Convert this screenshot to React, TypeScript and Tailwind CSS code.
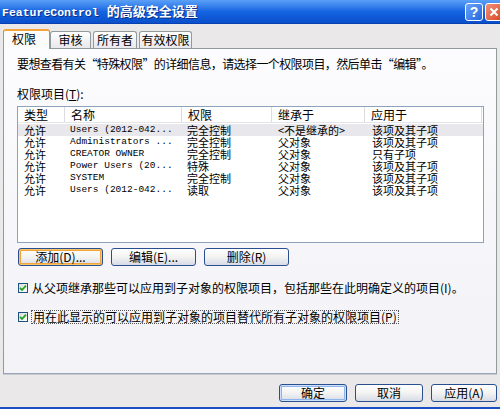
import React from 'react';

const cjk = { fontFamily: '"Noto Sans CJK SC", "Liberation Sans", sans-serif' };
const mono = { fontFamily: '"Liberation Mono", "Noto Sans CJK SC", monospace' };

const rows = [
  { type: '允许', name: 'Users (2012-042...', perm: '完全控制', from: '<不是继承的>', to: '该项及其子项' },
  { type: '允许', name: 'Administrators ...', perm: '完全控制', from: '父对象', to: '该项及其子项' },
  { type: '允许', name: 'CREATOR OWNER', perm: '完全控制', from: '父对象', to: '只有子项' },
  { type: '允许', name: 'Power Users (20...', perm: '特殊', from: '父对象', to: '该项及其子项' },
  { type: '允许', name: 'SYSTEM', perm: '完全控制', from: '父对象', to: '该项及其子项' },
  { type: '允许', name: 'Users (2012-042...', perm: '读取', from: '父对象', to: '该项及其子项' },
];

const XpButton: React.FC<{ label: string; width: string; ring?: 'orange' | 'blue' }> = ({ label, width, ring }) => (
  <button
    className={`${width} h-[18px] rounded-[3px] border border-[#2a4f8f] bg-gradient-to-b from-white via-[#f3f3f1] to-[#d6dbe7] text-[12px] leading-none text-black flex items-center justify-center whitespace-nowrap ${
      ring === 'orange'
        ? 'shadow-[inset_0_0_0_1px_#f9c56a,inset_0_0_0_2px_#f0a43a]'
        : ring === 'blue'
        ? 'shadow-[inset_0_0_0_1px_#cde0fb,inset_0_0_0_2px_#8eb4ec]'
        : ''
    }`}
    style={cjk}
  >
    {label}
  </button>
);

const CheckBox: React.FC = () => (
  <span className="w-[10px] h-[10px] border border-[#1c5180] bg-gradient-to-br from-[#dcdcd6] to-white flex items-center justify-center shrink-0">
    <svg width="8" height="8" viewBox="0 0 8 8">
      <path d="M1 3.8 L3 6 L7 1.6" stroke="#21a121" strokeWidth="1.8" fill="none" />
    </svg>
  </span>
);

const App: React.FC = () => {
  const tabs = ['审核', '所有者', '有效权限'];
  return (
    <div className="w-[500px] h-[409px] flex flex-col bg-[#ebe8ea] overflow-hidden" style={cjk}>
      {/* title bar */}
      <div className="h-[24px] shrink-0 flex items-center justify-between pl-[2px] bg-gradient-to-b from-[#5aa0f6] via-[#1464e2] to-[#0a4fcc] border-b border-[#0a3fb0]">
        <div className="text-white font-bold text-[13px] flex items-baseline [text-shadow:1px_1px_0_#0a2f8a]">
          <span style={mono} className="text-[11.5px]">FeatureControl</span>
          <span className="ml-[8px]">的高级安全设置</span>
        </div>
        <div className="flex items-center gap-[2px] self-start mt-[3px]">
          <div className="w-[18px] h-[18px] rounded-[3px] border border-white bg-gradient-to-br from-[#6aa4f7] to-[#2266dd] text-white text-[14px] font-bold leading-none flex items-center justify-center" style={{ fontFamily: '"Liberation Sans", sans-serif' }}>
            ?
          </div>
          <div className="w-[18px] h-[18px] rounded-[3px] border border-white bg-gradient-to-br from-[#f0907a] to-[#d9441c] text-white flex items-center justify-center -mr-[3px]">
            <svg width="10" height="10" viewBox="0 0 10 10">
              <path d="M1.5 1.5 L8.5 8.5 M8.5 1.5 L1.5 8.5" stroke="white" strokeWidth="2" />
            </svg>
          </div>
        </div>
      </div>

      {/* tabs */}
      <div className="mt-[5px] ml-[3px] flex items-end h-[19px] shrink-0 relative z-10">
        <div className="w-[47px] h-[20px] -mb-[1px] bg-[#fbfbfc] border border-b-0 border-[#919b9c] border-t-[#f0a43a] border-t-2 rounded-t-[3px] text-[12px] pl-[8px] pt-[1px] leading-[14px] whitespace-nowrap">
          权限
        </div>
        {tabs.map((t, i) => (
          <div
            key={t}
            className={`h-[17px] bg-gradient-to-b from-white to-[#e8e8ed] border border-b-0 border-[#919b9c] rounded-t-[3px] text-[12px] leading-[16px] whitespace-nowrap flex justify-center ${
              i === 0 ? 'w-[41px]' : i === 1 ? 'w-[44px] ml-[2px]' : 'w-[53px] ml-[2px]'
            }`}
          >
            {t}
          </div>
        ))}
      </div>

      {/* tab panel */}
      <div className="mx-[3px] h-[326px] shrink-0 border border-[#919b9c] border-b-[#9aa6b8] shadow-[0_1px_0_#c8c8d0] bg-gradient-to-b from-[#fcfcfe] to-[#f2f2f7] pt-[9px] px-[13px] text-[12px] leading-[12px] text-black flex flex-col">
        <div className="whitespace-nowrap tracking-[-0.6px]">要想查看有关“特殊权限”的详细信息，请选择一个权限项目，然后单击“编辑”。</div>
        <div className="mt-[18px]">
          权限项目(<span className="underline">T</span>):
        </div>

        {/* list view */}
        <div className="mt-[6px] w-[467px] h-[137px] border border-[#8da3bd] bg-white flex flex-col">
          <div className="h-[16px] grid grid-cols-[46px_117px_90px_93px_118px] border-b border-[#e4e4e8] leading-[15px]">
            {['类型', '名称', '权限', '继承于', '应用于'].map((h, i) => (
              <div key={h} className={`pl-[6px] ${i > 0 ? 'border-l border-[#dcdce0]' : ''} ${i === 3 ? 'pl-[3px]' : ''} ${i === 4 ? 'pl-[2px] border-r' : ''}`}>
                {h}
              </div>
            ))}
          </div>
          <div className="mt-[1px]">
            {rows.map((r, idx) => (
              <div
                key={idx}
                className={`h-[12px] grid grid-cols-[46px_117px_90px_93px_118px] text-[11px] leading-[12px] ${idx === 0 ? 'bg-[#e8e7ec]' : ''}`}
              >
                <div className="pl-[6px]">{r.type}</div>
                <div className="pl-[6px] text-[9.5px] whitespace-nowrap" style={mono}>
                  {r.name}
                </div>
                <div className="pl-[6px]">{r.perm}</div>
                <div className="pl-[7px] whitespace-nowrap">{r.from}</div>
                <div className="pl-[8px] whitespace-nowrap">{r.to}</div>
              </div>
            ))}
          </div>
        </div>

        {/* action buttons */}
        <div className="mt-[5px] ml-[1px] flex gap-[8px]">
          <XpButton label="添加(D)..." width="w-[85px]" ring="orange" />
          <XpButton label="编辑(E)..." width="w-[85px]" />
          <XpButton label="删除(R)" width="w-[85px]" />
        </div>

        <div className="mt-[16px] ml-[1px] flex items-center gap-[4px]">
          <CheckBox />
          <span className="whitespace-nowrap">从父项继承那些可以应用到子对象的权限项目，包括那些在此明确定义的项目(I)。</span>
        </div>
        <div className="mt-[17px] ml-[1px] flex items-center gap-[4px]">
          <CheckBox />
          <span className="whitespace-nowrap outline outline-1 outline-dotted outline-[#555] px-[1px]">
            用在此显示的可以应用到子对象的项目替代所有子对象的权限项目(P)
          </span>
        </div>
      </div>

      {/* bottom buttons */}
      <div className="mt-[10px] flex justify-end gap-[8px] pr-[3px]">
        <XpButton label="确定" width="w-[68px]" ring="blue" />
        <XpButton label="取消" width="w-[68px]" />
        <XpButton label="应用(A)" width="w-[66px]" />
      </div>
      <div className="mt-auto h-[2px] bg-[#1d4fc4]" />
    </div>
  );
};

export default App;
